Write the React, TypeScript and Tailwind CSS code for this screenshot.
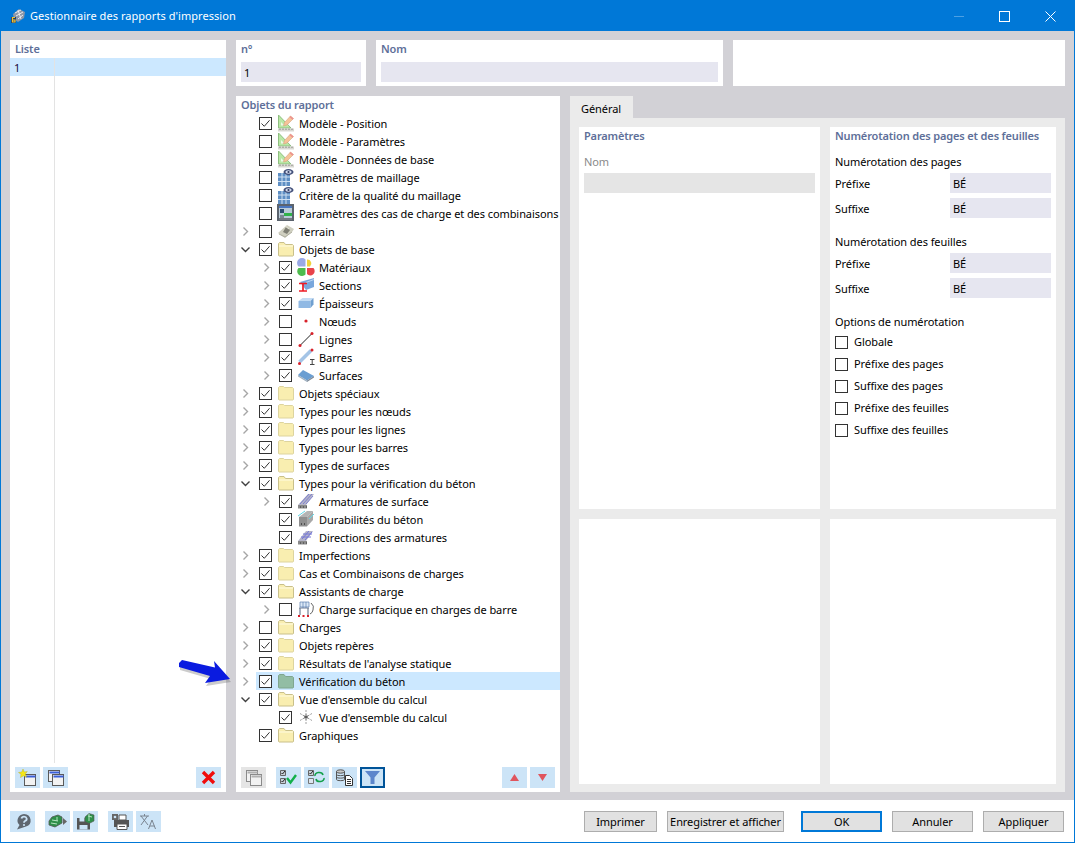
import type { ReactNode } from "react";

type IconName =
  | "model" | "mesh" | "loads" | "terrain" | "open" | "folder" | "materials" | "sections" | "thick"
  | "node" | "line" | "bar" | "surface" | "rebar" | "durab" | "direct" | "charge" | "green" | "star";

interface Row {
  label: string;
  level: 0 | 1;
  checked: boolean;
  arrow?: "right" | "down";
  icon: IconName;
  selected?: boolean;
}

const ROWS: Row[] = [
  { label: "Modèle - Position", level: 0, checked: true, icon: "model" },
  { label: "Modèle - Paramètres", level: 0, checked: false, icon: "model" },
  { label: "Modèle - Données de base", level: 0, checked: false, icon: "model" },
  { label: "Paramètres de maillage", level: 0, checked: false, icon: "mesh" },
  { label: "Critère de la qualité du maillage", level: 0, checked: false, icon: "mesh" },
  { label: "Paramètres des cas de charge et des combinaisons", level: 0, checked: false, icon: "loads" },
  { label: "Terrain", level: 0, checked: false, arrow: "right", icon: "terrain" },
  { label: "Objets de base", level: 0, checked: true, arrow: "down", icon: "open" },
  { label: "Matériaux", level: 1, checked: true, arrow: "right", icon: "materials" },
  { label: "Sections", level: 1, checked: true, arrow: "right", icon: "sections" },
  { label: "Épaisseurs", level: 1, checked: true, arrow: "right", icon: "thick" },
  { label: "Nœuds", level: 1, checked: false, arrow: "right", icon: "node" },
  { label: "Lignes", level: 1, checked: false, arrow: "right", icon: "line" },
  { label: "Barres", level: 1, checked: true, arrow: "right", icon: "bar" },
  { label: "Surfaces", level: 1, checked: true, arrow: "right", icon: "surface" },
  { label: "Objets spéciaux", level: 0, checked: true, arrow: "right", icon: "folder" },
  { label: "Types pour les nœuds", level: 0, checked: true, arrow: "right", icon: "folder" },
  { label: "Types pour les lignes", level: 0, checked: true, arrow: "right", icon: "folder" },
  { label: "Types pour les barres", level: 0, checked: true, arrow: "right", icon: "folder" },
  { label: "Types de surfaces", level: 0, checked: true, arrow: "right", icon: "folder" },
  { label: "Types pour la vérification du béton", level: 0, checked: true, arrow: "down", icon: "open" },
  { label: "Armatures de surface", level: 1, checked: true, arrow: "right", icon: "rebar" },
  { label: "Durabilités du béton", level: 1, checked: true, icon: "durab" },
  { label: "Directions des armatures", level: 1, checked: true, icon: "direct" },
  { label: "Imperfections", level: 0, checked: true, arrow: "right", icon: "folder" },
  { label: "Cas et Combinaisons de charges", level: 0, checked: true, arrow: "right", icon: "folder" },
  { label: "Assistants de charge", level: 0, checked: true, arrow: "down", icon: "open" },
  { label: "Charge surfacique en charges de barre", level: 1, checked: false, arrow: "right", icon: "charge" },
  { label: "Charges", level: 0, checked: false, arrow: "right", icon: "open" },
  { label: "Objets repères", level: 0, checked: true, arrow: "right", icon: "folder" },
  { label: "Résultats de l'analyse statique", level: 0, checked: true, arrow: "right", icon: "folder" },
  { label: "Vérification du béton", level: 0, checked: true, arrow: "right", icon: "green", selected: true },
  { label: "Vue d'ensemble du calcul", level: 0, checked: true, arrow: "down", icon: "open" },
  { label: "Vue d'ensemble du calcul", level: 1, checked: true, icon: "star" },
  { label: "Graphiques", level: 0, checked: true, icon: "open" },
];

function TreeIcon({ name }: { name: IconName }) {
  const svg = (children: ReactNode) => (
    <svg className="w-[16px] h-[16px] shrink-0 overflow-visible" viewBox="0 0 16 16" fill="none">
      {children}
    </svg>
  );
  switch (name) {
    case "model":
      return svg(
        <>
          <path d="M.5 0v13h12.500z" fill="#b9e8a6" stroke="#8fbf80" />
          <path d="M3 7v3.500h3.500z" fill="#ecf8e6" />
          <path d="M6.500 7.500L12.500 1l3 2.500-6.500 6.500-3.500 1z" fill="#f6c39a" stroke="#d6a27c" strokeWidth="0.6" />
          <path d="M12.500 1l3 2.500-1 1.200-3-2.700z" fill="#ee8f8f" />
          <path d="M0 13.500h16v3H0z" fill="#d8d8d2" />
          <path d="M2 13.500v1.500M5 13.500v1.500M8 13.500v1.500M11 13.500v1.500M14 13.500v1.500" stroke="#85857f" />
        </>
      );
    case "mesh":
      return svg(
        <>
          <path d="M0 4h12v13H0z" fill="#5f8fc4" />
          <path d="M4 4v13M8 4v13M0 8h12M0 12.500h12" stroke="#cfe0f2" />
          <ellipse cx="10.500" cy="3" rx="5" ry="3" fill="#424f78" />
          <ellipse cx="10.500" cy="3" rx="3" ry="1.700" fill="#d5ddf0" />
          <circle cx="10.500" cy="3" r="1.100" fill="#2f3a60" />
        </>
      );
    case "loads":
      return svg(
        <>
          <path d="M-1 -1h17v17H-1z" fill="#5b636d" />
          <path d="M1 1h13v2H1z" fill="#4a77c0" />
          <path d="M1 3h13v10H1z" fill="#b9cbd8" />
          <path d="M2 4h4v4H2z" fill="#2c4d6e" />
          <path d="M6 8h8v3H6z" fill="#2fb24a" />
          <path d="M2 10h4v3H2z" fill="#7a8894" />
          <path d="M1 14h13" stroke="#8a9199" />
        </>
      );
    case "terrain":
      return svg(
        <>
          <path d="M0 10l9-8 7 4-2 3-7 6z" fill="#cfcfc0" />
          <path d="M5 9l3-5 4 3-3 4z" fill="#7f7f74" />
          <path d="M1 11l6 3 7-5" stroke="#aeae9e" />
          <path d="M7 3l4 3" stroke="#e6e6da" />
        </>
      );
    case "open":
      return svg(
        <>
          <path d="M.5 14.500V2.500l1-1h4.500l1.500 2h7l1 1v10l-.5.500h-14z" fill="#f9eeb0" stroke="#c9c08a" />
          <path d="M1 5h14" stroke="#fffbe2" />
        </>
      );
    case "folder":
      return svg(
        <path d="M.5 14.500V2.500l1-1h4l1 1h8l1 1v11l-.5.500h-14z" fill="#f9eeb0" stroke="#ddd49e" />
      );
    case "green":
      return svg(
        <path d="M.5 14.500V2.500l1-1h4.500l1.500 2h7l1 1v10l-.5.500h-14z" fill="#92bda4" stroke="#7fa58f" />
      );
    case "materials":
      return svg(
        <>
          <path d="M.5 7.500A4 4 0 0 1 7.500.500V7.500z" fill="#9aa9e6" />
          <path d="M9 .500A4 4 0 0 1 12 7.500H9z" fill="#f0d23c" />
          <path d="M7.500 9v6.500A4.200 4.200 0 0 1 .5 9z" fill="#4dbb4d" />
          <path d="M9 9h6.500A4.200 4.200 0 0 1 9 15z" fill="#e8434a" />
        </>
      );
    case "sections":
      return svg(
        <>
          <path d="M2 5l14-4v9l-8 3z" fill="#7aa7dc" />
          <path d="M8 5.500l8-3" stroke="#bcd6f2" />
          <path d="M1 6.500h8M5 6.500v7M1 14h8" stroke="#ee1c25" strokeWidth="1.700" />
        </>
      );
    case "thick":
      return svg(
        <>
          <path d="M.5 6l4-3h11l-3 3z" fill="#c3dcf4" />
          <path d="M.5 6h12v7H.5z" fill="#90b9e4" />
          <path d="M12.500 6l3-3v6.500l-3 3.500z" fill="#6f9fd0" />
        </>
      );
    case "node":
      return svg(<circle cx="8" cy="8" r="1.600" fill="#d8212a" />);
    case "line":
      return svg(
        <>
          <path d="M2 14.500L14 2.500" stroke="#222" />
          <circle cx="2" cy="14.500" r="1.500" fill="#d8212a" />
          <circle cx="14" cy="2.500" r="1.500" fill="#d8212a" />
        </>
      );
    case "bar":
      return svg(
        <>
          <path d="M1.500 13L13 1.500" stroke="#a4c4e6" strokeWidth="3.500" />
          <circle cx="1.500" cy="14.500" r="1.500" fill="#d8212a" />
          <circle cx="14" cy="1" r="1.500" fill="#d8212a" />
          <path d="M12 10.500h4.500M14.200 10.500v5M12 15.500h4.500" stroke="#444" />
        </>
      );
    case "surface":
      return svg(
        <>
          <path d="M0 8l5-5 11 6-7 4.500z" fill="#6a9ed2" />
          <path d="M0 8l9 5.500V15L0 9.500z" fill="#9fb0c0" />
          <path d="M9 13.500l7-4.500v1.500L9 15z" fill="#7d8a98" />
        </>
      );
    case "rebar":
      return svg(
        <>
          <path d="M0 12L10 1h6L8 12z" fill="#b5b5c8" />
          <path d="M2 11l9-10M5 11l9-10M8 11l7-8" stroke="#7d7fd0" />
          <path d="M0 12h9v3.500H0z" fill="#8b8b8b" />
          <path d="M2 14h.8M5 14h.8M8 14h.8" stroke="#222" />
        </>
      );
    case "durab":
      return svg(
        <>
          <path d="M1 6l8-6h6l-6 6z" fill="#b4b4b4" />
          <path d="M1 6h8v9.500H1z" fill="#8f8f8f" />
          <path d="M9 6l6-6v9l-6 6.500z" fill="#a8a8a8" />
          <path d="M3 13h1M6 13h1" stroke="#111" />
          <path d="M0 5L7 0M11 8l5-5" stroke="#5fd8e8" />
        </>
      );
    case "direct":
      return svg(
        <>
          <path d="M0 12L8 2h7L8 12z" fill="#b5b5c8" />
          <path d="M4 10l7-8M7 11l7-8M3 8h10M5 5h9" stroke="#7678d8" />
          <path d="M0 12h9v3.500H0z" fill="#8b8b8b" />
          <path d="M2 14h.8M5 14h.8M8 14h.8" stroke="#222" />
        </>
      );
    case "charge":
      return svg(
        <>
          <path d="M1 7h10M2 7v7M10 7v7" stroke="#6f7f95" strokeWidth="1.200" />
          <path d="M2 1h9v5H2z" fill="#dbe8f6" stroke="#5c7fb0" strokeWidth="0.7" />
          <path d="M5 1v6M8 1v6" stroke="#5c7fb0" strokeWidth="0.7" />
          <path d="M0 15h12" stroke="#d8212a" strokeWidth="1.800" strokeDasharray="2 2.500" />
          <path d="M13 2a6 6 0 0 1 2 7 5 5 0 0 1-3 4" stroke="#666" />
        </>
      );
    case "star":
      return svg(
        <>
          <path d="M8 1v14M2 4.500l12 7M14 4.500l-12 7" stroke="#a0a0a0" strokeDasharray="2 1" />
          <path d="M8 5.500v5M5.800 6.800l4.400 2.400M10.200 6.800l-4.400 2.400" stroke="#555" />
        </>
      );
  }
}

function Check({ checked }: { checked: boolean }) {
  return (
    <span className="w-[13px] h-[13px] shrink-0 border border-[#333333] bg-white flex items-center justify-center">
      {checked && (
        <svg className="w-[11px] h-[11px]" viewBox="0 0 11 11" fill="none">
          <path d="M1.500 5.500l2.800 2.800 5.200-6" stroke="#333333" />
        </svg>
      )}
    </span>
  );
}

function Chevron({ dir }: { dir: "right" | "down" }) {
  return dir === "right" ? (
    <svg className="w-[9px] h-[9px]" viewBox="0 0 9 9" fill="none">
      <path d="M2.500 .5l4 4-4 4" stroke="#a6a6a6" strokeWidth="1.400" />
    </svg>
  ) : (
    <svg className="w-[9px] h-[9px]" viewBox="0 0 9 9" fill="none">
      <path d="M.5 2.500l4 4 4-4" stroke="#404040" strokeWidth="1.400" />
    </svg>
  );
}

function TreeRow({ row }: { row: Row }) {
  let inner = "flex flex-1 h-[18px] items-center pl-[3px] ml-[6px]";
  if (row.level === 1) inner = "flex flex-1 h-[18px] items-center pl-[3px] ml-[5px]";
  if (row.selected) inner = "flex flex-1 h-[18px] items-center pl-[3px] ml-[6px] bg-[#cce8ff]";
  return (
    <div className={row.level === 1 ? "flex h-[18px] items-center pl-[25px]" : "flex h-[18px] items-center pl-[4px]"}>
      <span className="w-[10px] h-[9px] flex items-center justify-center shrink-0">
        {row.arrow && <Chevron dir={row.arrow} />}
      </span>
      <div className={inner}>
        <Check checked={row.checked} />
        <span className="ml-[6px]">
          <TreeIcon name={row.icon} />
        </span>
        <span className="ml-[5px] pt-[2px] whitespace-nowrap">{row.label}</span>
      </div>
    </div>
  );
}

function ToolBtn({ children, active, muted }: { children?: ReactNode; active?: boolean; muted?: boolean }) {
  let cls = "w-[25px] h-[21px] flex items-center justify-center shrink-0 bg-[#cce4f7]";
  if (active) cls = "w-[25px] h-[21px] flex items-center justify-center shrink-0 bg-[#cce4f7] border-2 border-[#005499]";
  if (muted) cls = "w-[25px] h-[21px] flex items-center justify-center shrink-0 bg-[#e5e5e5]";
  return <div className={cls}>{children}</div>;
}

function WinGlyph({ x, y, color = "#5a5a5a", title = "#3a5fd8" }: { x: number; y: number; color?: string; title?: string }) {
  return (
    <>
      <rect x={x} y={y} width="11" height="11" fill="#f2f2f2" stroke={color} />
      <rect x={x + 1} y={y + 1} width="10" height="2" fill={title} />
    </>
  );
}

function Small({ children }: { children: ReactNode }) {
  return (
    <svg className="w-[19px] h-[17px]" viewBox="0 0 19 17" fill="none">
      {children}
    </svg>
  );
}

function PanelTitle({ children }: { children: ReactNode }) {
  return (
    <div className="h-[18px] leading-[18px] font-semibold text-[#5e6f99] whitespace-nowrap tracking-[-0.15px]">
      {children}
    </div>
  );
}

function FieldRow({ label }: { label: string }) {
  return (
    <div className="flex h-[20px] items-center justify-between">
      <span className="pt-[2px]">{label}</span>
      <span className="w-[101px] h-[20px] bg-[#e6e6f0] pl-[3px] leading-[22px]">BÉ</span>
    </div>
  );
}

function OptionRow({ label }: { label: string }) {
  return (
    <div className="flex h-[22px] items-center gap-[6px]">
      <Check checked={false} />
      <span>{label}</span>
    </div>
  );
}

function FootBtn({ label, width, primary }: { label: string; width: string; primary?: boolean }) {
  return (
    <button
      className={
        primary
          ? `${width} h-[21px] bg-[#e1e1e1] border-2 border-[#0078d7] text-center leading-[17px] whitespace-nowrap`
          : `${width} h-[21px] bg-[#e1e1e1] border border-[#adadad] text-center leading-[19px] whitespace-nowrap`
      }
    >
      {label}
    </button>
  );
}

export default function App() {
  return (
    <div className="relative w-[1075px] h-[843px] border border-[#0078d7] flex flex-col bg-white text-black text-[11px] tracking-[-0.08px] font-['Noto_Sans',sans-serif] overflow-hidden">
      {/* title bar */}
      <div className="h-[30px] shrink-0 bg-[#0078d7] flex items-center text-white">
        <svg className="ml-[9px] w-[16px] h-[16px]" viewBox="0 0 16 16" fill="none">
          <path d="M3 6l6-5 6 3-1 6-6 4-4-3z" fill="#8d97a8" />
          <path d="M5 5l6-3M6 8l7-4M8 11l5-4M8 2l3 9" stroke="#e8eaf0" />
          <path d="M1 9h5v6H1z" fill="#1f3f6a" />
          <path d="M5 9.500H2.500v4.500H5v-2H3" stroke="#f2c230" strokeWidth="1.200" />
        </svg>
        <span className="ml-[4px] text-[11px] tracking-[0.05px]">Gestionnaire des rapports d'impression</span>
        <div className="ml-auto flex items-center">
          <span className="w-[10px] h-px bg-[#4ca0e4]" />
          <span className="ml-[35px] w-[11px] h-[11px] border border-white" />
          <svg className="ml-[35px] mr-[18px] w-[11px] h-[11px]" viewBox="0 0 11 11" fill="none">
            <path d="M.5.5l10 10M10.500.5l-10 10" stroke="#fff" />
          </svg>
        </div>
      </div>

      {/* body */}
      <div className="flex-1 min-h-0 bg-[#d2d1d6] flex gap-[10px] pl-[9px] pr-[9px] pt-[9px] pb-[8px]">
        {/* liste */}
        <div className="w-[216px] bg-white flex flex-col">
          <div className="pl-[5px]">
            <PanelTitle>Liste</PanelTitle>
          </div>
          <div className="h-[18px] bg-[#cce8ff] leading-[20px]">
            <div className="w-[45px] h-[18px] pl-[4px] border-r border-[#e3e3e3] text-[#1a0a40]">1</div>
          </div>
          <div className="flex-1 w-[45px] border-r border-[#e3e3e3]" />
          <div className="flex items-center px-[5px] gap-[3px] pb-[4px] pt-[4px]">
            <ToolBtn>
              <Small>
                <WinGlyph x={6.5} y={5.5} />
                <path d="M5 0l1.300 3 3-.5-2 2.500 1.200 3-3-1.200-3 1.700.5-3.300L.5 3.500 3.800 3z" fill="#f5e618" stroke="#b0a820" strokeWidth="0.4" />
              </Small>
            </ToolBtn>
            <ToolBtn>
              <Small>
                <WinGlyph x={2.5} y={1.5} />
                <WinGlyph x={6.5} y={5.5} />
              </Small>
            </ToolBtn>
            <div className="ml-auto">
              <ToolBtn>
                <svg className="w-[15px] h-[15px]" viewBox="0 0 15 15" fill="none">
                  <path d="M2 2l11 11M13 2L2 13" stroke="#f00d0d" strokeWidth="3.400" />
                </svg>
              </ToolBtn>
            </div>
          </div>
        </div>

        {/* everything right of the list */}
        <div className="flex-1 min-w-0 flex flex-col gap-[10px]">
          <div className="flex gap-[10px] h-[46px] shrink-0">
            <div className="w-[130px] bg-white px-[5px]">
              <PanelTitle>n°</PanelTitle>
              <div className="mt-[4px] h-[20px] bg-[#e6e6f0] pl-[3px] leading-[22px]">1</div>
            </div>
            <div className="w-[347px] bg-white px-[5px]">
              <PanelTitle>Nom</PanelTitle>
              <div className="mt-[4px] h-[20px] bg-[#e6e6f0]" />
            </div>
            <div className="flex-1 bg-white" />
          </div>

          <div className="flex-1 min-h-0 flex gap-[10px]">
            {/* report objects */}
            <div className="w-[324px] bg-white flex flex-col">
              <div className="pl-[5px]">
                <PanelTitle>Objets du rapport</PanelTitle>
              </div>
              <div className="flex-1">
                {ROWS.map((row, i) => (
                  <TreeRow key={i} row={row} />
                ))}
              </div>
              <div className="flex items-center px-[5px] pb-[4px]">
                <ToolBtn muted>
                  <Small>
                    <WinGlyph x={2.5} y={1.5} color="#8a8a8a" title="#b0b0b0" />
                    <WinGlyph x={6.5} y={5.5} color="#8a8a8a" title="#b0b0b0" />
                  </Small>
                </ToolBtn>
                <div className="ml-[10px] flex gap-[3px]">
                  <ToolBtn>
                    <Small>
                      <path d="M1.500 1.500h5v5h-5zM1.500 9.500h5v5h-5z" fill="#c8d0d8" stroke="#666" />
                      <path d="M2.500 4l1 1 2.500-3M2.500 12l1 1 2.500-3" stroke="#222" />
                      <path d="M8 9l3.500 4.500L17 6" stroke="#12b04a" strokeWidth="2.400" />
                    </Small>
                  </ToolBtn>
                  <ToolBtn>
                    <Small>
                      <path d="M1.500 1.500h5v5h-5z" fill="#c8d0d8" stroke="#666" />
                      <path d="M1.500 9.500h5v5h-5z" fill="#dce6ef" stroke="#777" />
                      <path d="M2.500 4l1 1 2.500-3" stroke="#222" />
                      <path d="M8 7a4 3 0 0 1 8-1M17 9a4 3 0 0 1-8 1" stroke="#12a04a" strokeWidth="1.600" />
                    </Small>
                  </ToolBtn>
                  <ToolBtn>
                    <Small>
                      <ellipse cx="5.500" cy="2.500" rx="4" ry="1.700" fill="#c8c8c8" stroke="#555" />
                      <path d="M1.500 2.500v8c0 1.500 8 1.500 8 0v-8M1.500 5.500c0 1.500 8 1.500 8 0M1.500 8c0 1.500 8 1.500 8 0" stroke="#555" />
                      <path d="M10.500 6.500h4l3 3v7h-7z" fill="#fff" stroke="#333" />
                      <path d="M12 10.500h4M12 12.500h4M12 14.500h4" stroke="#333" />
                    </Small>
                  </ToolBtn>
                  <ToolBtn active>
                    <svg className="w-[15px] h-[13px]" viewBox="0 0 15 13">
                      <path d="M0 0h15L9.500 6.500V13h-4V6.500z" fill="#5c86cc" />
                    </svg>
                  </ToolBtn>
                </div>
                <div className="ml-auto flex gap-[3px]">
                  <ToolBtn>
                    <svg className="w-[9px] h-[7px]" viewBox="0 0 9 7">
                      <path d="M4.500 0L9 7H0z" fill="#e0555e" />
                    </svg>
                  </ToolBtn>
                  <ToolBtn>
                    <svg className="w-[9px] h-[7px]" viewBox="0 0 9 7">
                      <path d="M0 0h9L4.500 7z" fill="#e0555e" />
                    </svg>
                  </ToolBtn>
                </div>
              </div>
            </div>

            {/* tab */}
            <div className="flex-1 min-h-0 flex flex-col">
              <div className="w-[63px] h-[22px] bg-[#ebebeb] pl-[11px] leading-[26px] shrink-0">Général</div>
              <div className="flex-1 min-h-0 bg-[#ebebeb] pl-[9px] pr-[9px] pt-[9px] pb-[8px] grid grid-cols-[241px_226px] grid-rows-[382px_265px] gap-[10px]">
                <div className="bg-white px-[5px]">
                  <PanelTitle>Paramètres</PanelTitle>
                  <div className="mt-[8px] h-[18px] leading-[18px] text-[#8a8a8a]">Nom</div>
                  <div className="mt-[2px] h-[20px] bg-[#e5e5e5]" />
                </div>
                <div className="bg-white px-[5px]">
                  <PanelTitle>Numérotation des pages et des feuilles</PanelTitle>
                  <div className="mt-[8px] h-[18px] leading-[18px]">Numérotation des pages</div>
                  <div className="mt-[2px] flex flex-col gap-[5px]">
                    <FieldRow label="Préfixe" />
                    <FieldRow label="Suffixe" />
                  </div>
                  <div className="mt-[15px] h-[18px] leading-[18px]">Numérotation des feuilles</div>
                  <div className="mt-[2px] flex flex-col gap-[5px]">
                    <FieldRow label="Préfixe" />
                    <FieldRow label="Suffixe" />
                  </div>
                  <div className="mt-[15px] h-[18px] leading-[18px]">Options de numérotation</div>
                  <OptionRow label="Globale" />
                  <OptionRow label="Préfixe des pages" />
                  <OptionRow label="Suffixe des pages" />
                  <OptionRow label="Préfixe des feuilles" />
                  <OptionRow label="Suffixe des feuilles" />
                </div>
                <div className="bg-white" />
                <div className="bg-white" />
              </div>
            </div>
          </div>
        </div>
      </div>

      {/* footer */}
      <div className="h-[42px] shrink-0 flex items-center pl-[9px] pr-[10px]">
        <div className="flex items-center">
          <ToolBtn>
            <svg className="w-[18px] h-[17px]" viewBox="0 0 18 17">
              <path d="M10 1a7 6.500 0 0 1 2 12.600L3 16.500l2.500-4.500A7 6.500 0 0 1 10 1z" fill="#5f6770" />
              <path d="M7.500 5.500a2.600 2.300 0 1 1 3.500 2.500q-1 .6-1 1.800" stroke="#cce4f7" strokeWidth="1.800" fill="none" />
              <circle cx="10" cy="12" r="1.100" fill="#cce4f7" />
            </svg>
          </ToolBtn>
          <div className="ml-[10px] flex gap-[3px]">
            <ToolBtn>
              <Small>
                <path d="M1 8l3-4 6-2 4 2v6l-7 4-6-2z" fill="#2f8f4a" stroke="#555" strokeWidth="0.8" />
                <path d="M4 7l6 1M3 10l6 1M9 4v4" stroke="#b6e6c0" />
                <path d="M15 5l4 3.500-4 3.500z" fill="#666" />
              </Small>
            </ToolBtn>
            <ToolBtn>
              <Small>
                <path d="M1 5h13v11.500H1z" fill="#555" />
                <path d="M3.500 5h5v3.500h-5zM3.500 12h8v4.500h-8z" fill="#cce4f7" />
                <path d="M9 4l4-3.500 5 1.500v6l-5 2.500-4-2z" fill="#2f8f4a" stroke="#555" strokeWidth="0.6" />
                <path d="M12 3l4 1M13 1v7" stroke="#b6e6c0" />
              </Small>
            </ToolBtn>
          </div>
          <div className="ml-[10px] flex gap-[3px]">
            <ToolBtn>
              <Small>
                <path d="M1 1h6v6H1z" fill="#666" />
                <circle cx="4" cy="4" r="1.300" fill="#cce4f7" />
                <path d="M8 2h7v5H8z" fill="#fff" stroke="#555" />
                <path d="M3 7h15v7H3z" fill="#555" />
                <path d="M6 11h10v5.500H6z" fill="#fff" stroke="#555" />
                <path d="M8 13.500h6" stroke="#555" />
              </Small>
            </ToolBtn>
            <ToolBtn>
              <Small>
                <path d="M1 3h9M5.500 1v2M2 3l7 9M8.500 3L2 12" stroke="#7a8490" />
                <path d="M9.500 16l3.500-9 3.500 9M11 13h4.500" stroke="#7a8490" />
              </Small>
            </ToolBtn>
          </div>
        </div>
        <div className="ml-auto flex items-center">
          <FootBtn label="Imprimer" width="w-[73px]" />
          <div className="ml-[10px]">
            <FootBtn label="Enregistrer et afficher" width="w-[117px]" />
          </div>
          <div className="ml-[17px] flex gap-[10px]">
            <FootBtn label="OK" width="w-[81px]" primary />
            <FootBtn label="Annuler" width="w-[81px]" />
            <FootBtn label="Appliquer" width="w-[81px]" />
          </div>
        </div>
      </div>

      {/* annotation arrow */}
      <svg className="absolute left-[170px] top-[650px] w-[70px] h-[45px]" viewBox="0 0 70 45">
        <path d="M8 12l3-3 33 7.500L43 10l16 18-25 4 5-7-31-9z" fill="#555" opacity="0.3" transform="translate(1 3)" />
        <path d="M8 12l3-3 33 7.500L43 10l16 18-25 4 5-7-31-9z" fill="#0a1be0" />
      </svg>
    </div>
  );
}
